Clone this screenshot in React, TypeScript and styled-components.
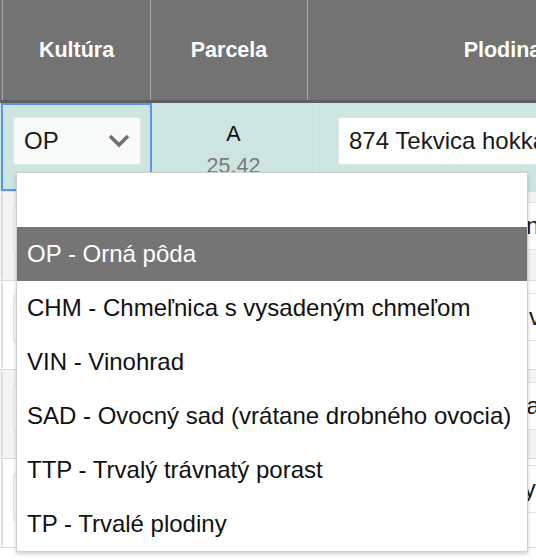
import React, { ReactElement } from 'react';
import styled, { createGlobalStyle } from 'styled-components';

const GlobalStyle = createGlobalStyle`
  html, body {
    margin: 0;
    padding: 0;
    background: #fff;
    overflow: hidden;
  }
  body {
    font-family: "Liberation Sans", Arial, sans-serif;
    color: #111;
  }
`;

const TableWrapper = styled.div`
  width: 536px;
  height: 560px;
  overflow: hidden;
  position: relative;
`;

const HeaderRow = styled.div`
  display: grid;
  grid-template-columns: 148px 157px 390px;
  height: 100px;
  padding-left: 2px;
  background-color: #737373;
  border-bottom: 3px solid #5e5e5e;
`;

const HeaderCell = styled.div`
  display: flex;
  align-items: center;
  justify-content: center;
  border-left: 1px solid #a9a9a9;
  color: #fff;
  font-size: 21.5px;
  font-weight: bold;
`;

const BodyRow = styled.div<{ $bg: string }>`
  display: grid;
  grid-template-columns: 152px 164px 380px;
  height: 88px;
  background-color: ${(p) => p.$bg};
  border-bottom: 1px solid #dcdcdc;
`;

const KulturaCell = styled.div<{ $focused?: boolean }>`
  position: relative;
  padding: 12px 0 0 10px;
  border: 2px solid ${(p) => (p.$focused ? '#5b95ee' : 'transparent')};
  border-left-color: ${(p) => (p.$focused ? '#5b95ee' : '#dedede')};
  margin-left: 1px;
`;

const SelectBox = styled.div`
  display: flex;
  align-items: center;
  justify-content: space-between;
  width: 128px;
  height: 48px;
  box-sizing: border-box;
  padding: 0 9px 0 10px;
  background-color: #f8f9f9;
  border: 1px solid #e2e8e6;
  border-radius: 3px;
  font-size: 24px;
  color: #1a1a1a;
`;

const ParcelaCell = styled.div`
  display: flex;
  flex-direction: column;
  align-items: center;
  padding-top: 19px;
  border-right: 1px solid #dbe9e6;
  line-height: 24px;
  font-size: 21.5px;
`;

const ParcelaName = styled.span`
  color: #111;
`;

const ParcelaArea = styled.span`
  color: #7a7a7a;
  margin-top: 8px;
`;

const PlodinaCell = styled.div<{ $top: number }>`
  padding: ${(p) => p.$top}px 0 0 22px;
`;

const TextInput = styled.div`
  display: flex;
  align-items: center;
  width: 400px;
  height: 48px;
  box-sizing: border-box;
  padding-left: 10px;
  background-color: #fff;
  border: 1px solid #e3e6e6;
  border-radius: 3px;
  font-size: 24px;
  color: #1a1a1a;
  white-space: nowrap;
  overflow: hidden;
`;

const Dropdown = styled.div`
  position: absolute;
  top: 67px;
  left: 13px;
  z-index: 5;
  width: 512px;
  box-sizing: border-box;
  background-color: #fff;
  border: 1px solid #cfcfcf;
  box-shadow: 0 2px 4px rgba(0, 0, 0, 0.18);
`;

const SearchRow = styled.div`
  height: 54px;
`;

const Option = styled.div<{ $active?: boolean }>`
  display: flex;
  align-items: center;
  height: 54px;
  padding-left: 10px;
  font-size: 24px;
  white-space: nowrap;
  background-color: ${(p) => (p.$active ? '#757575' : '#fff')};
  color: ${(p) => (p.$active ? '#fff' : '#111')};
`;

const Chevron = (): ReactElement => (
  <svg width="24" height="16" viewBox="0 0 24 16">
    <polyline points="3,3 12,12 21,3" fill="none" stroke="#707070" strokeWidth="3.6" />
  </svg>
);

const options = [
  'OP - Orná pôda',
  'CHM - Chmeľnica s vysadeným chmeľom',
  'VIN - Vinohrad',
  'SAD - Ovocný sad (vrátane drobného ovocia)',
  'TTP - Trvalý trávnatý porast',
  'TP - Trvalé plodiny',
];

const rows = [
  { kultura: 'OP', parcela: 'B', area: '12.10', plodina: '1311 Pšenica jarná', bg: '#f4f4f4', top: 10 },
  { kultura: 'OP', parcela: 'C', area: '8.75', plodina: '461 Kukurica na voskovú zrelosť', bg: '#fff', top: 12 },
  { kultura: 'OP', parcela: 'D', area: '30.02', plodina: '621 Cukrová repa', bg: '#f4f4f4', top: 12 },
  { kultura: 'OP', parcela: 'E', area: '4.60', plodina: '401 Jačmeň siaty jarný', bg: '#fff', top: 6 },
];

const App = (): ReactElement => (
  <TableWrapper>
    <GlobalStyle />
    <HeaderRow>
      <HeaderCell>Kultúra</HeaderCell>
      <HeaderCell>Parcela</HeaderCell>
      <HeaderCell>Plodina</HeaderCell>
    </HeaderRow>
    <BodyRow $bg="#cde5e0">
      <KulturaCell $focused>
        <SelectBox>
          OP
          <Chevron />
        </SelectBox>
        <Dropdown>
          <SearchRow />
          {options.map((o, i) => (
            <Option key={o} $active={i === 0}>
              {o}
            </Option>
          ))}
        </Dropdown>
      </KulturaCell>
      <ParcelaCell>
        <ParcelaName>A</ParcelaName>
        <ParcelaArea>25.42</ParcelaArea>
      </ParcelaCell>
      <PlodinaCell $top={14}>
        <TextInput>874 Tekvica hokkaido</TextInput>
      </PlodinaCell>
    </BodyRow>
    {rows.map((r) => (
      <BodyRow key={r.parcela} $bg={r.bg}>
        <KulturaCell>
          <SelectBox>
            {r.kultura}
            <Chevron />
          </SelectBox>
        </KulturaCell>
        <ParcelaCell>
          <ParcelaName>{r.parcela}</ParcelaName>
          <ParcelaArea>{r.area}</ParcelaArea>
        </ParcelaCell>
        <PlodinaCell $top={r.top}>
          <TextInput>{r.plodina}</TextInput>
        </PlodinaCell>
      </BodyRow>
    ))}
  </TableWrapper>
);

export default App;
